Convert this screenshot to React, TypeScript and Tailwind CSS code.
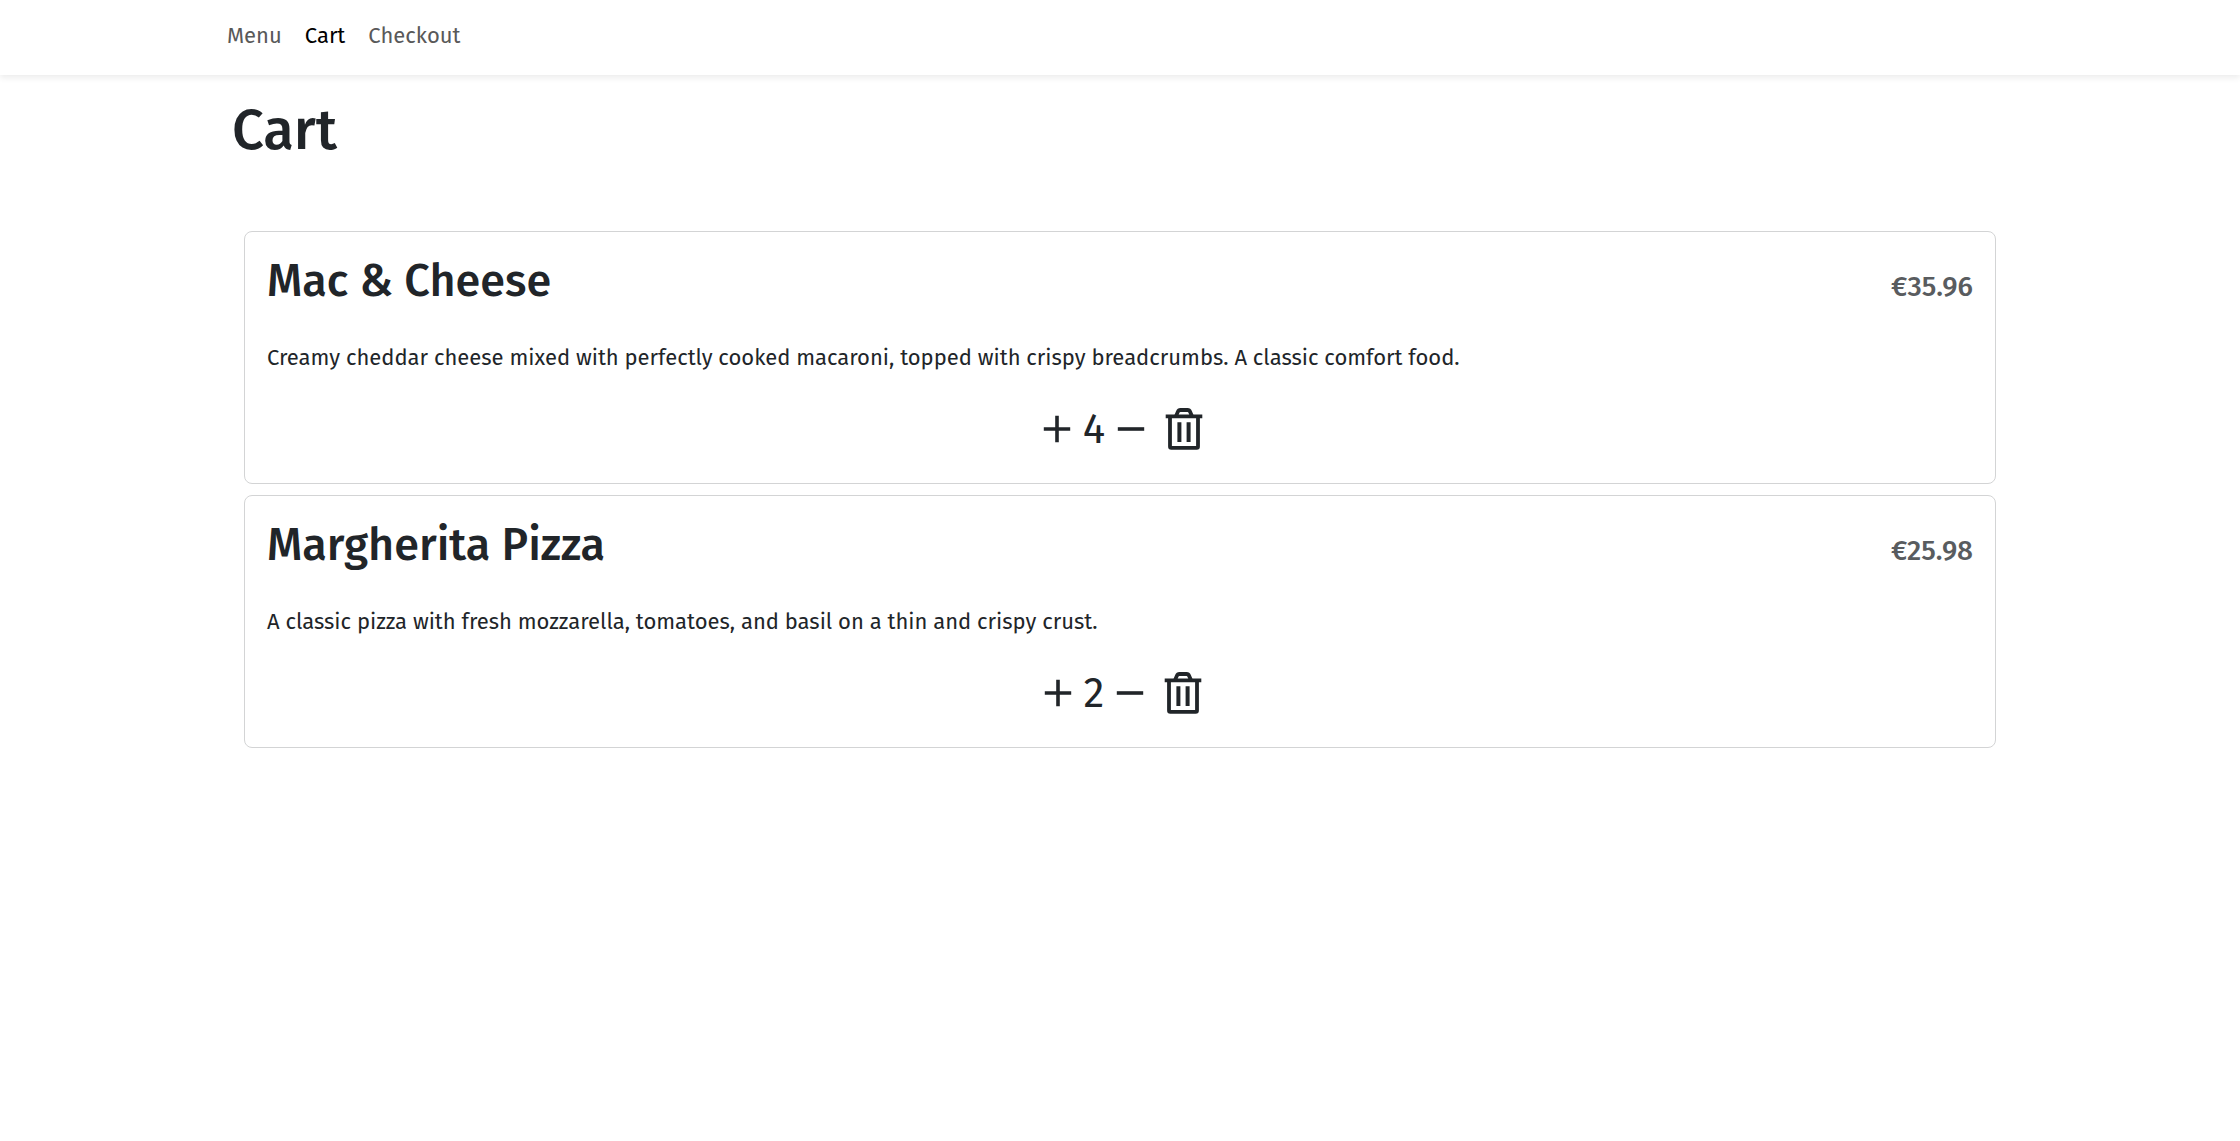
type CartItem = {
  name: string;
  description: string;
  price: string;
  quantity: number;
};

const links = [
  { label: "Menu", active: false },
  { label: "Cart", active: true },
  { label: "Checkout", active: false },
];

const items: CartItem[] = [
  {
    name: "Mac & Cheese",
    description:
      "Creamy cheddar cheese mixed with perfectly cooked macaroni, topped with crispy breadcrumbs. A classic comfort food.",
    price: "€35.96",
    quantity: 4,
  },
  {
    name: "Margherita Pizza",
    description:
      "A classic pizza with fresh mozzarella, tomatoes, and basil on a thin and crispy crust.",
    price: "€25.98",
    quantity: 2,
  },
];

function PlusIcon() {
  return (
    <svg className="size-7" viewBox="0 0 28 28" fill="none" stroke="currentColor" strokeWidth="3.6" aria-hidden="true">
      <path d="M14 .8v26.4M.8 14h26.4" />
    </svg>
  );
}

function MinusIcon() {
  return (
    <svg className="size-7" viewBox="0 0 28 28" fill="none" stroke="currentColor" strokeWidth="3.6" aria-hidden="true">
      <path d="M.8 14h26.4" />
    </svg>
  );
}

function TrashIcon() {
  return (
    <svg className="h-[42px] w-[38px]" viewBox="0 0 38 42" fill="none" stroke="currentColor" strokeWidth="3.8" aria-hidden="true">
      <path d="M.7 8.3h36.6" />
      <path d="M5 8.3v30.2q0 1.3 1.3 1.3h25.4q1.3 0 1.3-1.3V8.3" />
      <path d="M11 8.3 12.8 3.9Q13.6 2 15.4 2h7.2q1.8 0 2.6 1.9L27 8.3" />
      <path d="M14.4 14.3v19.8M23.6 14.3v19.8" strokeWidth="4" />
    </svg>
  );
}

function CartCard({ item }: { item: CartItem }) {
  return (
    <li className="flex flex-col rounded-lg border border-[#d3d4d5] bg-white px-[22px] pt-[22px] pb-[29px]">
      <div className="flex items-baseline justify-between">
        <h2 className="text-[45px] leading-[54px] font-medium">{item.name}</h2>
        <p className="text-[28px] leading-[34px] font-medium text-[#595c5f]">{item.price}</p>
      </div>
      <p className="mt-[33px] text-[22px] leading-[34px]">{item.description}</p>
      <div className="mt-[29px] flex h-[50px] items-center justify-center pl-1.5">
        <button type="button" aria-label={`Add one ${item.name}`}>
          <PlusIcon />
        </button>
        <span className="mx-3 text-[42px] leading-[50px]">{item.quantity}</span>
        <button type="button" aria-label={`Remove one ${item.name}`}>
          <MinusIcon />
        </button>
        <button type="button" className="ml-5" aria-label={`Delete ${item.name}`}>
          <TrashIcon />
        </button>
      </div>
    </li>
  );
}

export default function App() {
  return (
    <div className="min-h-screen bg-white font-['Fira_Sans','Noto_Sans',sans-serif] text-[#212529]">
      <header className="bg-white shadow-[0_3px_6px_rgba(0,0,0,0.075)]">
        <nav className="mx-auto flex max-w-[1786px] gap-[23px] pt-[19px] pb-[22px] text-[22px] leading-[34px]">
          {links.map((link) => (
            <a
              key={link.label}
              href="#"
              aria-current={link.active ? "page" : undefined}
              className={link.active ? "text-black" : "text-[#595959]"}
            >
              {link.label}
            </a>
          ))}
        </nav>
      </header>
      <main className="mx-auto max-w-[1776px] pt-[22px]">
        <h1 className="text-[56px] leading-[67px] font-medium">Cart</h1>
        <ul className="mt-[67px] flex flex-col gap-[11px] px-3">
          {items.map((item) => (
            <CartCard key={item.name} item={item} />
          ))}
        </ul>
      </main>
    </div>
  );
}
